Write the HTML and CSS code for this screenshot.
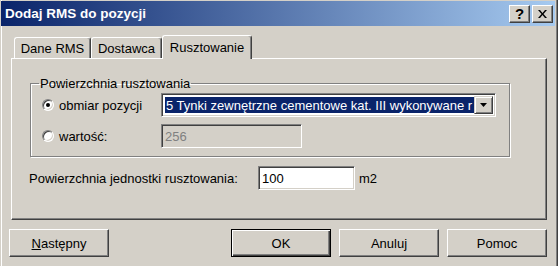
FILE: index.html
```html
<!DOCTYPE html>
<html lang="pl">
<head>
	<meta charset="UTF-8" />
	<title>Dodaj RMS do pozycji</title>
	<link rel="stylesheet" href="styles.css">
</head>
<body>
	<div class="window">
		<div class="titleBar">
			<span class="titleText">Dodaj RMS do pozycji</span>
			<span class="capBtn helpBtn">?</span>
			<span class="capBtn closeBtn">
				<svg width="9" height="8" viewBox="0 0 9 8"><path d="M0 0h2l2.5 3 2.5-3h2L5.5 4 9 8H7L4.5 5 2 8H0l3.5-4z" fill="#000"/></svg>
			</span>
		</div>
		<div class="tabs">
			<div class="tab tabRms">Dane RMS</div>
			<div class="tab tabDost">Dostawca</div>
			<div class="tab tabRusz active">Rusztowanie</div>
		</div>
		<div class="panel">
			<fieldset class="group">
				<legend>Powierzchnia rusztowania</legend>
				<div class="row">
					<label class="radioLabel"><span class="radio checked"></span>obmiar pozycji</label>
					<div class="combo">
						<div class="comboText">5 Tynki zewnętrzne cementowe kat. III wykonywane r</div>
						<div class="comboBtn">
							<svg width="7" height="4" viewBox="0 0 7 4"><path d="M0 0h7L3.5 4z" fill="#000"/></svg>
						</div>
					</div>
				</div>
				<div class="row row2">
					<label class="radioLabel"><span class="radio"></span>wartość:</label>
					<div class="field disabled valueField">256</div>
				</div>
			</fieldset>
			<div class="unitRow">
				<span class="unitLabel">Powierzchnia jednostki rusztowania:</span>
				<div class="field unitField">100</div>
				<span class="unit">m2</span>
			</div>
		</div>
		<div class="buttons">
			<div class="btn"><u>N</u>astępny</div>
			<div class="btn btnDefault pushRight">OK</div>
			<div class="btn">Anuluj</div>
			<div class="btn">Pomoc</div>
		</div>
	</div>
</body>
</html>
```

FILE: styles.css
```css
body {
	margin: 0;
	padding: 0;
	background-color: #d4d0c8;
	font-family: "Liberation Sans", Arial, sans-serif;
	font-size: 13px;
	color: #000;
}
.window {
	width: 558px;
	height: 266px;
	box-sizing: border-box;
	padding: 1px 3px 0 1px;
	background-color: #d4d0c8;
	box-shadow: inset 1px 0 #d4d0c8, inset 2px 0 #fff, inset -1px 0 #404040, inset -2px 0 #808080;
}
.titleBar {
	height: 25px;
	display: flex;
	align-items: center;
	padding: 0 2px 0 4px;
	background: linear-gradient(to right, #0a246a, #a6caf0);
}
.titleText {
	flex: 1;
	color: #fff;
	font-weight: bold;
	font-size: 13.5px;
}
.capBtn {
	width: 21px;
	height: 18px;
	box-sizing: border-box;
	display: flex;
	align-items: center;
	justify-content: center;
	background-color: #d4d0c8;
	border: 1px solid;
	border-color: #fff #404040 #404040 #fff;
	box-shadow: inset -1px -1px #808080;
}
.helpBtn {
	font-weight: bold;
	font-size: 15px;
	line-height: 1;
	margin-right: 2px;
}
.tabs {
	display: flex;
	align-items: flex-end;
	height: 23px;
	margin-top: 9px;
	padding-left: 13px;
}
.tab {
	height: 21px;
	box-sizing: border-box;
	display: flex;
	align-items: center;
	justify-content: center;
	border: 1px solid;
	border-bottom: none;
	border-color: #fff #404040 #404040 #fff;
	border-radius: 3px 3px 0 0;
	box-shadow: inset -1px 0 #808080;
}
.tabRms {
	width: 77px;
}
.tabDost {
	width: 71px;
}
.tabRusz {
	width: 90px;
}
.tab.active {
	height: 24px;
	margin-bottom: -1px;
	padding-bottom: 1px;
	background-color: #d4d0c8;
	position: relative;
	z-index: 1;
}
.panel {
	width: 536px;
	height: 162px;
	box-sizing: border-box;
	margin-left: 10px;
	padding: 17px 0 0 18px;
	border: 1px solid;
	border-color: #fff #404040 #404040 #fff;
	box-shadow: inset -1px -1px #808080;
}
.group {
	width: 480px;
	box-sizing: border-box;
	margin: 0;
	padding: 2px 0 8px 11px;
	border: 1px solid #808080;
	box-shadow: inset 1px 1px #fff, 1px 1px #fff;
}
.group legend {
	margin-left: -3px;
	padding: 0 1px;
	line-height: 15px;
}
.row {
	display: flex;
	align-items: center;
	height: 24px;
}
.row2 {
	margin-top: 7px;
}
.radioLabel {
	width: 119px;
	display: flex;
	align-items: center;
}
.radio {
	width: 12px;
	height: 12px;
	box-sizing: border-box;
	margin-right: 5px;
	display: flex;
	align-items: center;
	justify-content: center;
	border-radius: 50%;
	border: 1px solid;
	border-color: #808080 #fff #fff #808080;
	box-shadow: inset 1px 1px #404040, inset -1px -1px #d4d0c8;
	background-color: #fff;
}
.radio.checked::after {
	content: "";
	width: 4px;
	height: 4px;
	border-radius: 50%;
	background-color: #000;
}
.combo, .field {
	height: 24px;
	box-sizing: border-box;
	border: 1px solid;
	border-color: #808080 #fff #fff #808080;
	box-shadow: inset 1px 1px #404040, inset -1px -1px #d4d0c8;
	background-color: #fff;
}
.combo {
	width: 335px;
	display: flex;
	padding: 2px;
}
.comboText {
	flex: 1;
	min-width: 0;
	margin: 1px 0 1px 1px;
	padding-left: 1px;
	overflow: hidden;
	white-space: nowrap;
	line-height: 18px;
	background-color: #0a246a;
	color: #fff;
}
.comboBtn {
	width: 19px;
	box-sizing: border-box;
	display: flex;
	align-items: center;
	justify-content: center;
	background-color: #d4d0c8;
	border: 1px solid;
	border-color: #d4d0c8 #404040 #404040 #d4d0c8;
	box-shadow: inset 1px 1px #fff, inset -1px -1px #808080;
}
.field {
	display: flex;
	align-items: center;
	padding-left: 3px;
}
.field.disabled {
	background-color: #d4d0c8;
	color: #808080;
}
.valueField {
	width: 141px;
}
.unitRow {
	display: flex;
	align-items: center;
	margin-top: 9px;
	margin-left: -1px;
}
.unitLabel {
	width: 229px;
}
.unitField {
	width: 97px;
}
.unit {
	margin-left: 4px;
}
.buttons {
	display: flex;
	margin-top: 9px;
	padding-left: 8px;
}
.btn {
	width: 100px;
	height: 28px;
	box-sizing: border-box;
	display: flex;
	align-items: center;
	justify-content: center;
	border: 1px solid;
	border-color: #fff #404040 #404040 #fff;
	box-shadow: inset -1px -1px #808080;
	margin-right: 8px;
}
.btn u {
	text-decoration-thickness: 1px;
}
.btnDefault {
	border-color: #000;
	box-shadow: inset 1px 1px #fff, inset -1px -1px #404040, inset -2px -2px #808080;
}
.pushRight {
	margin-left: auto;
}
```
